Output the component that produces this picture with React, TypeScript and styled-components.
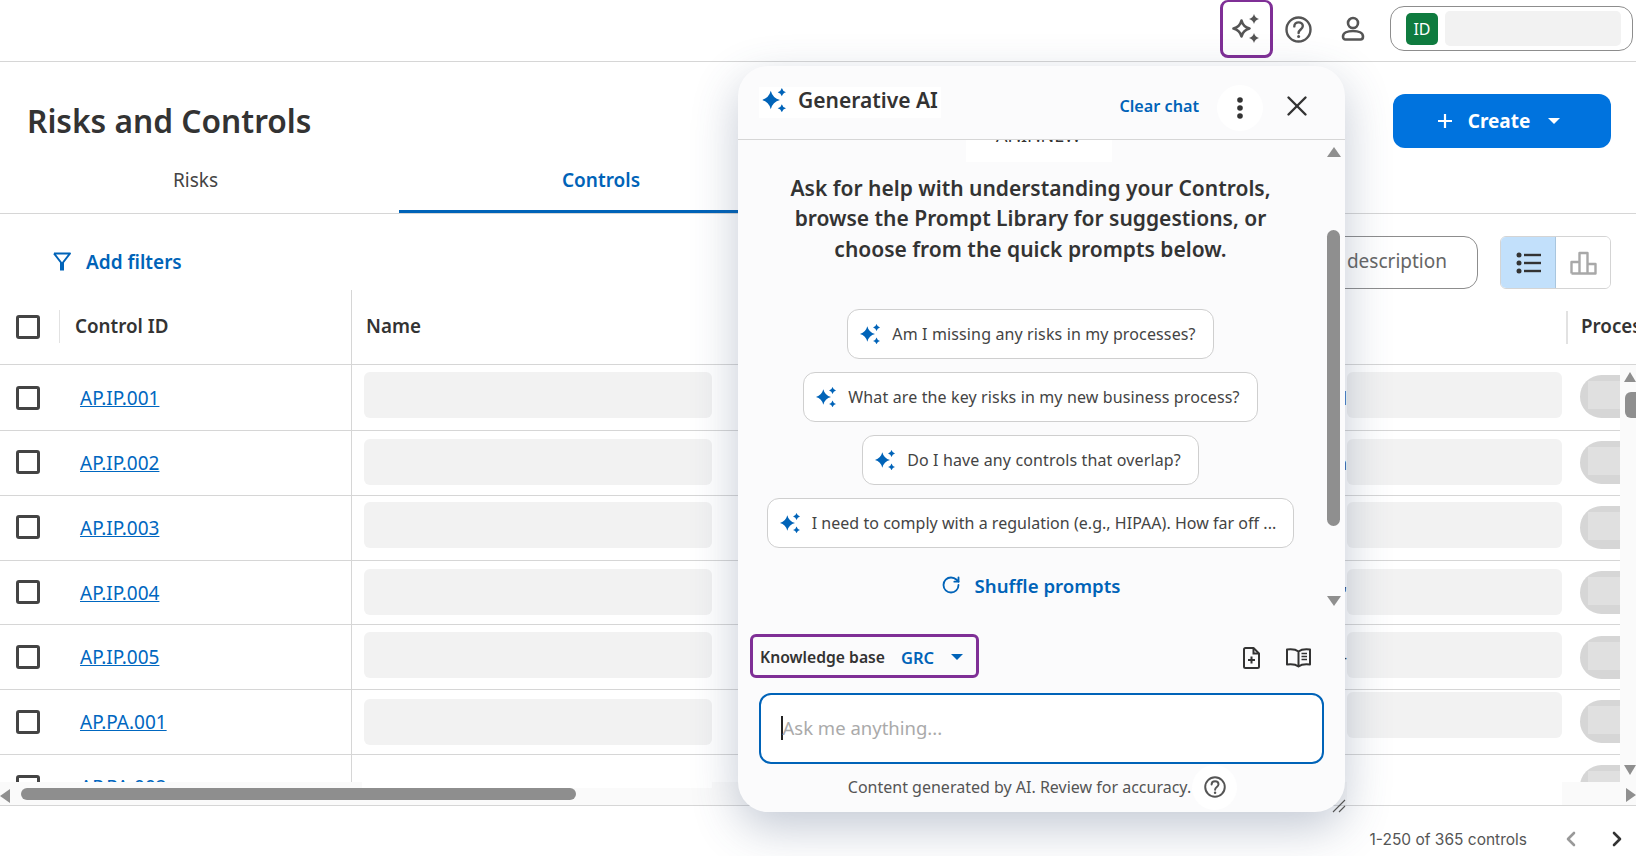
import styled, { createGlobalStyle } from "styled-components";
import { ChevronLeft, ChevronRight, RotateCw, X } from "lucide-react";

const BLUE = "#0063b8";
const PURPLE = "#7f2f96";
const FONT = `"Noto Sans", "Liberation Sans", sans-serif`;

const Global = createGlobalStyle`
  html, body { margin: 0; height: 856px; overflow: hidden; background: #fff; }
  body { font-family: ${FONT}; color: #333; }
  * { box-sizing: border-box; }
`;

const Page = styled.div`
  position: relative;
  width: 1636px;
  height: 856px;
  overflow: hidden;
`;

/* top bar */
const TopBar = styled.header`
  height: 62px;
  border-bottom: 1px solid #d6d6d6;
  display: flex;
  align-items: flex-start;
  justify-content: flex-end;
  padding-right: 3px;
`;
const AiButton = styled.div`
  width: 53px;
  height: 58px;
  border: 3px solid ${PURPLE};
  border-top-width: 2px;
  border-radius: 8px;
  display: flex;
  align-items: center;
  justify-content: center;
  padding-right: 3px;
  margin-right: 6px;
`;
const IconSlot = styled.div`
  width: 38px;
  height: 58px;
  display: flex;
  align-items: center;
  justify-content: center;
`;
const PersonSlot = styled(IconSlot)`
  width: 62px;
  padding-left: 9px;
`;
const Account = styled.div`
  width: 243px;
  height: 45px;
  margin: 6px 0 0 11px;
  border: 1px solid #8d8d8d;
  border-radius: 14px;
  display: flex;
  align-items: center;
  padding-left: 15px;
  gap: 7px;
`;
const Badge = styled.div`
  width: 32px;
  height: 32px;
  border-radius: 5px;
  background: #0f7b3f;
  color: #fff;
  font-size: 16px;
  display: flex;
  align-items: center;
  justify-content: center;
`;
const AccountName = styled.div`
  width: 176px;
  height: 35px;
  border-radius: 5px;
  background: #f2f2f2;
`;

/* title */
const TitleRow = styled.div`
  height: 88px;
  padding: 32px 25px 0 27px;
  display: flex;
  justify-content: space-between;
  align-items: flex-start;
`;
const Title = styled.h1`
  margin: 0;
  height: 54px;
  line-height: 53px;
  font-size: 31.7px;
  font-weight: 600;
  color: #333;
`;
const CreateButton = styled.div`
  width: 218px;
  height: 54px;
  border-radius: 12px;
  background: #0073de;
  color: #fff;
  font-size: 19px;
  font-weight: 700;
  display: flex;
  align-items: center;
  justify-content: center;
  gap: 15px;
  padding: 0 7px 1px 0;
`;
const PlusSign = styled.svg`
  width: 16px;
  height: 16px;
`;
const Caret = styled.span<{ $color: string; $size: number; $gap: number }>`
  width: 0;
  height: 0;
  margin-left: ${(p) => p.$gap}px;
  border-left: ${(p) => p.$size}px solid transparent;
  border-right: ${(p) => p.$size}px solid transparent;
  border-top: ${(p) => p.$size}px solid ${(p) => p.$color};
`;

/* tabs */
const Tabs = styled.div`
  height: 64px;
  border-bottom: 1px solid #d6d6d6;
  display: flex;
`;
const Tab = styled.div<{ $active?: boolean }>`
  width: ${(p) => (p.$active ? 404 : 399)}px;
  height: 63px;
  border-bottom: 3px solid ${(p) => (p.$active ? BLUE : "transparent")};
  display: flex;
  align-items: center;
  justify-content: center;
  padding-right: ${(p) => (p.$active ? 0 : 8)}px;
  font-size: 19px;
  font-weight: ${(p) => (p.$active ? 600 : 400)};
  color: ${(p) => (p.$active ? BLUE : "#444")};
`;

/* toolbar */
const Toolbar = styled.div`
  height: 76px;
  padding: 22px 25px 0 53px;
  display: flex;
  align-items: flex-start;
`;
const AddFilters = styled.div`
  height: 53px;
  display: flex;
  align-items: center;
  gap: 15px;
  padding-bottom: 2px;
  font-size: 19px;
  font-weight: 600;
  color: ${BLUE};
`;
const SearchBox = styled.div`
  margin-left: auto;
  width: 300px;
  height: 53px;
  border: 1px solid #8d8d8d;
  border-radius: 14px;
  display: flex;
  align-items: center;
  justify-content: flex-end;
  padding: 0 30px 4px 0;
  font-size: 19px;
  color: #666;
`;
const Toggle = styled.div`
  margin-left: 22px;
  width: 111px;
  height: 53px;
  border: 1px solid #d4d4d4;
  border-radius: 6px;
  display: flex;
  overflow: hidden;
`;
const ToggleItem = styled.div<{ $active?: boolean }>`
  flex: 1;
  display: flex;
  align-items: center;
  justify-content: center;
  background: ${(p) => (p.$active ? "#c2e0fb" : "#fff")};
  border-right: ${(p) => (p.$active ? "1px solid #a9c6de" : "none")};
`;

/* table */
const Table = styled.div`
  height: 492px;
  overflow: hidden;
`;
const HeadRow = styled.div`
  height: 75px;
  border-bottom: 1px solid #d6d6d6;
  display: grid;
  grid-template-columns: 60px 291px 1215px 70px;
  font-size: 18.8px;
  font-weight: 600;
  color: #333;
`;
const HeadCell = styled.div<{ $divider?: boolean }>`
  display: flex;
  align-items: center;
  padding-bottom: 3px;
  white-space: nowrap;
  border-left: ${(p) => (p.$divider ? "1px solid #d6d6d6" : "none")};
  padding-left: ${(p) => (p.$divider ? 14 : 0)}px;
`;
const HeadCheck = styled(HeadCell)`
  padding-left: 16px;
  padding-bottom: 1px;
  position: relative;
  &::after {
    content: "";
    position: absolute;
    right: 0;
    top: 20px;
    height: 33px;
    width: 1px;
    background: #e2e2e2;
  }
`;
const HeadId = styled(HeadCell)`
  padding-left: 15px;
`;
const HeadProcess = styled(HeadCell)`
  padding-left: 15px;
  position: relative;
  &::before {
    content: "";
    position: absolute;
    left: 0;
    top: 21px;
    height: 33px;
    width: 2px;
    background: #e2e2e2;
  }
`;
const Body = styled.div`
  height: 417px;
  display: flex;
`;
const Rows = styled.div`
  width: 1620px;
  overflow: hidden;
`;
const Row = styled.div<{ $height: number }>`
  height: ${(p) => p.$height}px;
  border-bottom: 1px solid #d6d6d6;
  display: grid;
  grid-template-columns: 60px 291px 996px 233px 40px;
  overflow: hidden;
`;
const CheckCell = styled.div<{ $lift: number }>`
  display: flex;
  align-items: center;
  padding: 0 0 ${(p) => p.$lift}px 16px;
`;
const Checkbox = styled.div`
  width: 24px;
  height: 24px;
  border: 3px solid #444;
  border-radius: 3px;
`;
const IdCell = styled.div<{ $lift: number }>`
  display: flex;
  align-items: center;
  padding: 1px 0 ${(p) => p.$lift}px 20px;
`;
const IdLink = styled.a`
  font-size: 19px;
  color: #0067c0;
  text-decoration: underline;
`;
const NameCell = styled.div`
  border-left: 1px solid #d6d6d6;
  padding-left: 12px;
  display: flex;
  align-items: flex-start;
`;
const Tail = styled.span`
  margin-left: auto;
  align-self: center;
  font-size: 18px;
  color: #333;
`;
const Redacted = styled.div<{ $top: number; $width: number; $hide?: boolean }>`
  margin-top: ${(p) => p.$top}px;
  width: ${(p) => p.$width}px;
  height: 46px;
  border-radius: 6px;
  background: ${(p) => (p.$hide ? "#fff" : "#f2f2f2")};
`;
const Owner = styled.div<{ $top: number }>`
  margin-top: ${(p) => p.$top}px;
  width: 80px;
  height: 43px;
  border-radius: 22px 0 0 22px;
  background: #d6d6d6;
  padding: 6px 0 0 8px;
  &::after {
    content: "";
    display: block;
    height: 28px;
    background: #e0e0e0;
  }
`;

/* scrollbars */
const VScroll = styled.div`
  width: 16px;
  height: 417px;
  background: #fafafa;
  display: flex;
  flex-direction: column;
  align-items: flex-end;
  padding-top: 7px;
`;
const ArrowUp = styled.div<{ $w: number }>`
  width: 0;
  height: 0;
  border-left: ${(p) => p.$w}px solid transparent;
  border-right: ${(p) => p.$w}px solid transparent;
  border-bottom: 10px solid #8f8f8f;
`;
const ArrowDown = styled.div<{ $w: number }>`
  width: 0;
  height: 0;
  margin-top: auto;
  border-left: ${(p) => p.$w}px solid transparent;
  border-right: ${(p) => p.$w}px solid transparent;
  border-top: 10px solid #8f8f8f;
`;
const VThumb = styled.div`
  width: 11px;
  height: 26px;
  margin-top: 10px;
  border-radius: 6px 0 0 6px;
  background: #8f8f8f;
`;
const VScrollEnd = styled.div`
  height: 7px;
  flex: none;
`;
const HScroll = styled.div`
  position: relative;
  height: 24px;
  background: #fafafa;
  border-bottom: 1px solid #d6d6d6;
`;
const HThumb = styled.div`
  position: absolute;
  left: 21px;
  top: 6px;
  width: 555px;
  height: 12px;
  border-radius: 6px;
  background: #8e8e8e;
`;
const HArrowLeft = styled.div`
  position: absolute;
  left: 0;
  top: 7px;
  border-top: 7px solid transparent;
  border-bottom: 7px solid transparent;
  border-right: 10px solid #8f8f8f;
`;
const HArrowRight = styled.div`
  position: absolute;
  right: 0;
  top: 6px;
  border-top: 7px solid transparent;
  border-bottom: 7px solid transparent;
  border-left: 10px solid #8f8f8f;
`;
const WhitePatch = styled.div<{ $left: number; $top: number; $width: number; $height: number }>`
  position: absolute;
  left: ${(p) => p.$left}px;
  top: ${(p) => p.$top}px;
  width: ${(p) => p.$width}px;
  height: ${(p) => p.$height}px;
  background: #fff;
`;

/* footer */
const Footer = styled.footer`
  height: 50px;
  display: flex;
  align-items: center;
  justify-content: flex-end;
  padding: 16px 7px 0 0;
  font-family: Inter, sans-serif;
  font-size: 15.5px;
  color: #555;
`;
const Pager = styled.div`
  display: flex;
  align-items: center;
  gap: 22px;
  margin-left: 32px;
`;

/* generative AI panel */
const Panel = styled.aside`
  position: absolute;
  left: 738px;
  top: 66px;
  width: 607px;
  height: 746px;
  border-radius: 30px;
  background: #fbfbfc;
  box-shadow: 0 16px 46px rgba(60, 80, 115, 0.3);
  display: flex;
  flex-direction: column;
`;
const PanelHead = styled.div`
  height: 74px;
  flex: none;
  border-bottom: 1px solid #d6d6d6;
  display: flex;
  align-items: flex-start;
  padding: 21px 31px 0 21px;
`;
const PanelTitle = styled.div`
  height: 31px;
  padding: 0 3px 5px;
  background: #fff;
  display: flex;
  align-items: center;
  gap: 12px;
  font-size: 21px;
  font-weight: 600;
  color: #333;
`;
const ClearChat = styled.div`
  margin-left: auto;
  height: 38px;
  padding-bottom: 1px;
  display: flex;
  align-items: center;
  font-size: 16.2px;
  font-weight: 600;
  color: ${BLUE};
`;
const KebabButton = styled.div`
  width: 46px;
  height: 46px;
  margin: -2px 0 0 18px;
  border-radius: 50%;
  background: #fff;
  display: flex;
  align-items: center;
  justify-content: center;
`;
const CloseButton = styled.div`
  width: 34px;
  height: 38px;
  margin-left: 17px;
  display: flex;
  align-items: center;
  justify-content: center;
  color: #333;
`;
const PanelBody = styled.div`
  height: 480px;
  flex: none;
  display: flex;
`;
const Messages = styled.div`
  width: 585px;
  display: flex;
  flex-direction: column;
  align-items: center;
`;
const ClippedChip = styled.div`
  width: 146px;
  height: 22px;
  background: #fff;
  overflow: hidden;
  text-align: center;
  font-size: 18px;
  line-height: 20px;
  color: #333;
  margin-left: 16px;
  flex: none;
  & > span {
    display: block;
    margin-top: -15px;
  }
`;
const Intro = styled.p`
  margin: 10.5px 0 0;
  width: 500px;
  text-align: center;
  font-size: 21px;
  font-weight: 600;
  line-height: 30.7px;
  color: #333;
`;
const Prompts = styled.div`
  margin-top: 44.5px;
  display: flex;
  flex-direction: column;
  align-items: center;
  gap: 13px;
`;
const Prompt = styled.div<{ $spacing: number }>`
  height: 50px;
  padding: 0 17px 1px 12px;
  border: 1px solid #cfcfcf;
  border-radius: 12px;
  background: #fff;
  display: flex;
  align-items: center;
  gap: 12px;
  font-size: 16px;
  letter-spacing: ${(p) => p.$spacing}px;
  color: #444;
  white-space: nowrap;
`;
const Shuffle = styled.div`
  margin-top: 22px;
  height: 30px;
  display: flex;
  align-items: center;
  gap: 14px;
  font-size: 18.6px;
  font-weight: 600;
  color: ${BLUE};
`;
const PanelScroll = styled.div`
  width: 22px;
  height: 480px;
  display: flex;
  flex-direction: column;
  align-items: center;
  padding: 7px 5px 14px 4px;
`;
const PanelThumb = styled.div`
  width: 13px;
  height: 296px;
  margin-top: 73px;
  flex: none;
  border-radius: 7px;
  background: #8f8f8f;
`;
const KbRow = styled.div`
  margin-top: 14px;
  padding: 0 34px 0 12px;
  height: 44px;
  flex: none;
  display: flex;
  align-items: center;
`;
const KbSelect = styled.div`
  width: 229px;
  height: 44px;
  border: 3px solid ${PURPLE};
  border-radius: 6px;
  display: flex;
  align-items: center;
  padding: 2px 0 0 7px;
  font-size: 15.7px;
  font-weight: 600;
  color: #333;
`;
const KbValue = styled.span`
  margin: 0 17px 0 16px;
  color: ${BLUE};
  font-size: 16.5px;
`;
const KbActions = styled.div`
  margin-left: auto;
  padding-top: 3px;
  display: flex;
  align-items: center;
  gap: 26px;
`;
const AskBox = styled.div`
  margin: 15px 21px 0;
  height: 71px;
  flex: none;
  border: 2.5px solid ${BLUE};
  border-radius: 12px;
  background: #fff;
  display: flex;
  align-items: center;
  padding: 0 0 3px 20px;
  font-size: 18.5px;
  color: #aaa;
`;
const TextCaret = styled.span`
  width: 1.5px;
  height: 24px;
  margin-top: 2px;
  background: #222;
`;
const Note = styled.div`
  height: 48px;
  flex: none;
  display: flex;
  align-items: center;
  justify-content: center;
  font-size: 16px;
  color: #555;
  padding: 0 0 2px 2px;
`;
const NoteHelp = styled.div`
  width: 45px;
  height: 45px;
  margin-left: 1px;
  border-radius: 50%;
  background: #fff;
  display: flex;
  align-items: center;
  justify-content: center;
`;
const ResizeGrip = styled.svg`
  position: absolute;
  right: -1px;
  bottom: -1px;
  width: 14px;
  height: 14px;
`;

const star = (cx: number, cy: number, r: number) => {
  const k = r * 0.2;
  return `M${cx} ${cy - r}Q${cx + k} ${cy - k} ${cx + r} ${cy}Q${cx + k} ${cy + k} ${cx} ${cy + r}Q${cx - k} ${cy + k} ${cx - r} ${cy}Q${cx - k} ${cy - k} ${cx} ${cy - r}Z`;
};

function SparkleOutline() {
  return (
    <svg width="27" height="29" viewBox="0 0 27 29">
      <path d={star(9.5, 14.5, 8)} fill="none" stroke="#555" strokeWidth="2.6" strokeLinejoin="round" />
      <path d={star(22, 5, 5)} fill="#555" />
      <path d={star(22, 24, 5)} fill="#555" />
    </svg>
  );
}

function SparkleFill({ size }: { size: number }) {
  return (
    <svg width={size} height={size} viewBox="0 0 26 26" style={{ flex: "none" }}>
      <path d={star(9.5, 13, 10)} fill={BLUE} />
      <path d={star(21.5, 4.5, 4.5)} fill={BLUE} />
      <path d={star(21.5, 22, 4.5)} fill={BLUE} />
    </svg>
  );
}

function HelpIcon({ size, stroke }: { size: number; stroke: number }) {
  return (
    <svg width={size} height={size} viewBox="0 0 27 27" fill="none">
      <circle cx="13.5" cy="13.5" r="12" stroke="#555" strokeWidth={stroke} />
      <path d="M9.3 10.4c0-2.4 1.9-4 4.3-4s4.2 1.5 4.2 3.7c0 3.5-4.2 3.3-4.2 6.9" stroke="#555" strokeWidth={stroke} strokeLinecap="round" />
      <circle cx="13.6" cy="20.6" r="1.5" fill="#555" />
    </svg>
  );
}

function PersonIcon() {
  return (
    <svg width="24" height="26" viewBox="0 0 24 26" fill="none" stroke="#555" strokeWidth="2.6">
      <circle cx="12" cy="7" r="5" />
      <path d="M2 20.5c0-3.5 4.5-5.5 10-5.500s10 2 10 5.500c0 2-1 3-2.500 3h-15c-1.500 0-2.500-1-2.500-3Z" strokeLinejoin="round" />
    </svg>
  );
}

function FilterIcon() {
  return (
    <svg width="18" height="19" viewBox="0 0 18 19" fill="none" stroke={BLUE} strokeWidth="2">
      <path d="M1 1.5h16L10 10.5V18.5M8 18.5V10.5L1 1.5" strokeLinejoin="round" />
    </svg>
  );
}

function ListIcon() {
  return (
    <svg width="25" height="22" viewBox="0 0 25 22" fill="#333">
      <circle cx="3" cy="3" r="2.5" />
      <circle cx="3" cy="11" r="2.5" />
      <circle cx="3" cy="19" r="2.5" />
      <rect x="8" y="1.8" width="17" height="2.4" />
      <rect x="8" y="9.8" width="17" height="2.4" />
      <rect x="8" y="17.8" width="17" height="2.4" />
    </svg>
  );
}

function ChartIcon() {
  return (
    <svg width="27" height="24" viewBox="0 0 27 24" fill="none" stroke="#a8a8a8" strokeWidth="2.4">
      <path d="M1.5 22.5V11h8v11.5M9.5 22.5V2h8v20.5M17.5 22.5V13h8v9.5ZM1.5 22.5h16" strokeLinejoin="round" />
    </svg>
  );
}

function KebabIcon() {
  return (
    <svg width="8" height="24" viewBox="0 0 8 24" fill="#333">
      <circle cx="4" cy="4" r="2.8" />
      <circle cx="4" cy="12" r="2.8" />
      <circle cx="4" cy="20" r="2.8" />
    </svg>
  );
}

function FilePlusIcon() {
  return (
    <svg width="17" height="22" viewBox="0 0 17 22" fill="none" stroke="#333" strokeWidth="2">
      <path d="M2.5 1h8L16 6.5v13c0 .8-.7 1.5-1.5 1.5h-12c-.8 0-1.500-.7-1.500-1.500v-17C1 1.700 1.700 1 2.500 1Z" strokeLinejoin="round" />
      <path d="M10.5 1v5.500H16M8.500 9.500v7M5 13h7" />
    </svg>
  );
}

function BookIcon() {
  return (
    <svg width="25" height="20" viewBox="0 0 25 20" fill="none" stroke="#333" strokeWidth="2">
      <path d="M12.5 3.5C10 1.500 5 1 1 1.500v15c4-.5 9 0 11.500 2 2.500-2 7.500-2.500 11.500-2v-15c-4-.5-9 0-11.500 2ZM12.500 3.500v15" strokeLinejoin="round" />
      <path d="M15.5 5.5h5.500M15.500 8.500h5.500M15.500 11.500h5.500" strokeWidth="1.6" />
    </svg>
  );
}

const rows = [
  { id: "AP.IP.001", height: 66, lift: 0, name: 7, desc: 7, owner: 10, tail: "d" },
  { id: "AP.IP.002", height: 65, lift: 2, name: 8, desc: 8, owner: 10, tail: "a" },
  { id: "AP.IP.003", height: 65, lift: 2, name: 6, desc: 6, owner: 10, tail: "" },
  { id: "AP.IP.004", height: 64, lift: 1, name: 8, desc: 8, owner: 10, tail: "'" },
  { id: "AP.IP.005", height: 65, lift: 1, name: 7, desc: 7, owner: 11, tail: "-" },
  { id: "AP.PA.001", height: 65, lift: 1, name: 9, desc: 2, owner: 10, tail: "" },
  { id: "AP.PA.002", height: 65, lift: 1, name: 9, desc: 9, owner: 10, tail: "", hide: true },
];

const prompts = [
  { text: "Am I missing any risks in my processes?", spacing: 0.13 },
  { text: "What are the key risks in my new business process?", spacing: 0.13 },
  { text: "Do I have any controls that overlap?", spacing: 0.13 },
  { text: "I need to comply with a regulation (e.g., HIPAA). How far off ...", spacing: 0.03 },
];

export default function App() {
  return (
    <Page>
      <Global />
      <TopBar>
        <AiButton>
          <SparkleOutline />
        </AiButton>
        <IconSlot>
          <HelpIcon size={27} stroke={2.4} />
        </IconSlot>
        <PersonSlot>
          <PersonIcon />
        </PersonSlot>
        <Account>
          <Badge>ID</Badge>
          <AccountName />
        </Account>
      </TopBar>

      <TitleRow>
        <Title>Risks and Controls</Title>
        <CreateButton>
          <PlusSign viewBox="0 0 16 16">
            <path d="M8 1v14M1 8h14" stroke="#fff" strokeWidth="2.2" />
          </PlusSign>
          Create
          <Caret $color="#fff" $size={6} $gap={3} />
        </CreateButton>
      </TitleRow>

      <Tabs>
        <Tab>Risks</Tab>
        <Tab $active>Controls</Tab>
      </Tabs>

      <Toolbar>
        <AddFilters>
          <FilterIcon />
          Add filters
        </AddFilters>
        <SearchBox>description</SearchBox>
        <Toggle>
          <ToggleItem $active>
            <ListIcon />
          </ToggleItem>
          <ToggleItem>
            <ChartIcon />
          </ToggleItem>
        </Toggle>
      </Toolbar>

      <Table>
        <HeadRow>
          <HeadCheck>
            <Checkbox />
          </HeadCheck>
          <HeadId>Control ID</HeadId>
          <HeadCell $divider>Name</HeadCell>
          <HeadProcess>Process</HeadProcess>
        </HeadRow>
        <Body>
          <Rows>
            {rows.map((r) => (
              <Row key={r.id} $height={r.height}>
                <CheckCell $lift={r.lift}>
                  <Checkbox />
                </CheckCell>
                <IdCell $lift={r.lift}>
                  <IdLink>{r.id}</IdLink>
                </IdCell>
                <NameCell>
                  <Redacted $top={r.name} $width={348} $hide={r.hide} />
                  <Tail>{r.tail}</Tail>
                </NameCell>
                <div>
                  <Redacted $top={r.desc} $width={215} $hide={r.hide} />
                </div>
                <Owner $top={r.owner} />
              </Row>
            ))}
          </Rows>
          <VScroll>
            <ArrowUp $w={6} />
            <VThumb />
            <ArrowDown $w={6} />
            <VScrollEnd />
          </VScroll>
        </Body>
      </Table>

      <HScroll>
        <HArrowLeft />
        <HThumb />
        <HArrowRight />
        <WhitePatch $left={362} $top={-11} $width={350} $height={17} />
        <WhitePatch $left={1347} $top={0} $width={215} $height={23} />
      </HScroll>

      <Footer>
        1-250 of 365 controls
        <Pager>
          <ChevronLeft size={24} color="#999" strokeWidth={2.6} />
          <ChevronRight size={24} color="#333" strokeWidth={2.6} />
        </Pager>
      </Footer>

      <Panel>
        <PanelHead>
          <PanelTitle>
            <SparkleFill size={24} />
            Generative AI
          </PanelTitle>
          <ClearChat>Clear chat</ClearChat>
          <KebabButton>
            <KebabIcon />
          </KebabButton>
          <CloseButton>
            <X size={34} strokeWidth={1.7} />
          </CloseButton>
        </PanelHead>

        <PanelBody>
          <Messages>
            <ClippedChip>
              <span>AP.IP.NEW</span>
            </ClippedChip>
            <Intro>
              Ask for help with understanding your Controls, browse the Prompt Library for suggestions, or choose from the quick prompts below.
            </Intro>
            <Prompts>
              {prompts.map((p) => (
                <Prompt key={p.text} $spacing={p.spacing}>
                  <SparkleFill size={20} />
                  {p.text}
                </Prompt>
              ))}
            </Prompts>
            <Shuffle>
              <RotateCw size={20} strokeWidth={2.2} />
              Shuffle prompts
            </Shuffle>
          </Messages>
          <PanelScroll>
            <ArrowUp $w={7} />
            <PanelThumb />
            <ArrowDown $w={7} />
          </PanelScroll>
        </PanelBody>

        <KbRow>
          <KbSelect>
            Knowledge base
            <KbValue>GRC</KbValue>
            <Caret $color={BLUE} $size={6} $gap={0} />
          </KbSelect>
          <KbActions>
            <FilePlusIcon />
            <BookIcon />
          </KbActions>
        </KbRow>

        <AskBox>
          <TextCaret />
          Ask me anything...
        </AskBox>

        <Note>
          Content generated by AI. Review for accuracy.
          <NoteHelp>
            <HelpIcon size={22} stroke={2.4} />
          </NoteHelp>
        </Note>

        <ResizeGrip viewBox="0 0 14 14" fill="none" stroke="#555" strokeWidth="1.1">
          <path d="M1 13 13 1M7 13l6-6" />
        </ResizeGrip>
      </Panel>
    </Page>
  );
}
